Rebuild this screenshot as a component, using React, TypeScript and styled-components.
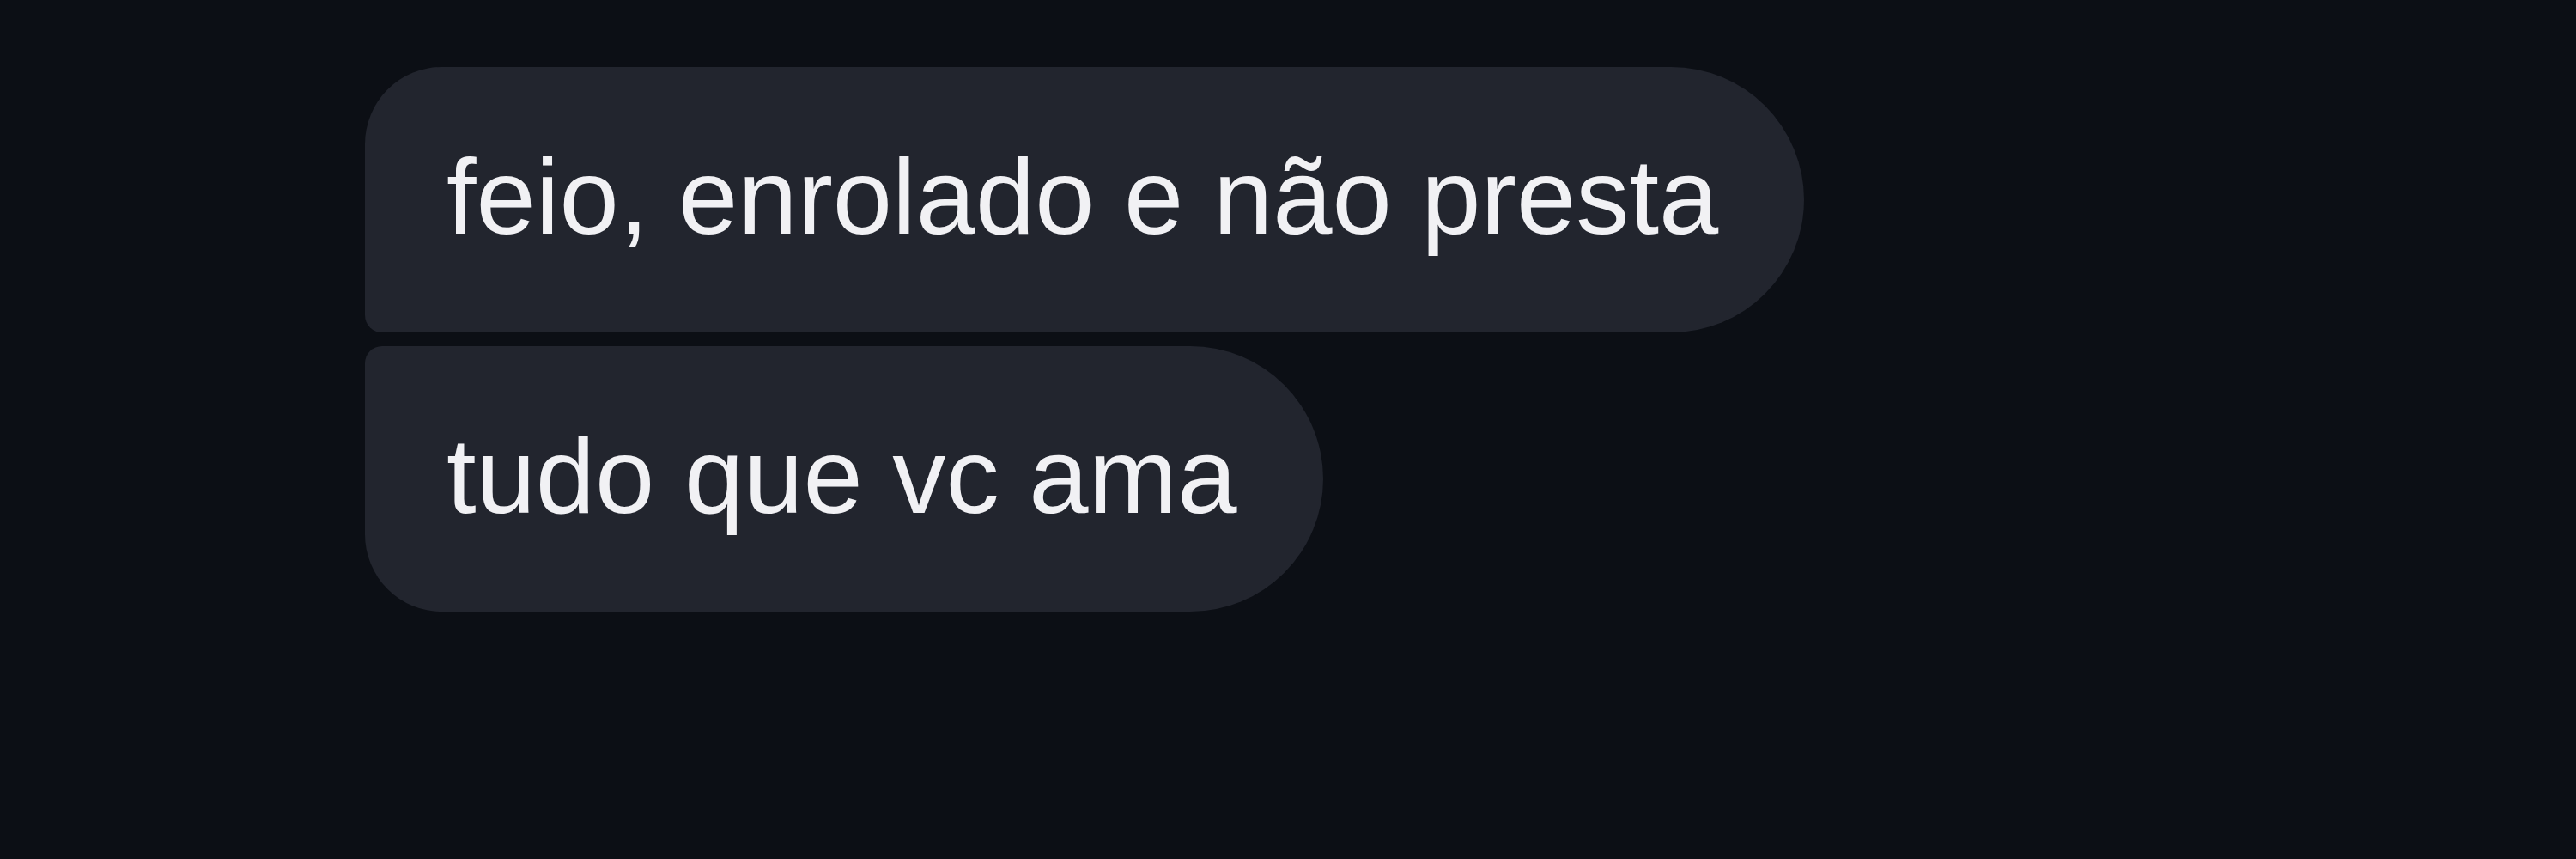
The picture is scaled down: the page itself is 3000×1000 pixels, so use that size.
import React from 'react'
import styled, { createGlobalStyle } from 'styled-components'

const GlobalStyle = createGlobalStyle`
    html, body {
        margin: 0;
        padding: 0;
        background: #0c0f15;
    }
`

const Screen = styled.main`
    width: 3000px;
    height: 1000px;
    background: #0c0f15;
    box-sizing: border-box;
    padding: 78px 0 0 425px;
    display: flex;
    flex-direction: column;
    align-items: flex-start;
    gap: 16px;
`

const Bubble = styled.div<{ $position: 'first' | 'last' }>`
    height: 309px;
    box-sizing: border-box;
    padding: 0 100px 8px 95px;
    display: flex;
    align-items: center;
    background: #22252e;
    color: #f1f1f4;
    font-family: "Liberation Sans", Arial, sans-serif;
    font-size: 124.5px;
    white-space: nowrap;
    border-radius: ${({ $position }) =>
        $position === 'first' ? '90px 155px 155px 20px' : '20px 155px 155px 90px'};
`

const App = () => {
    return (
        <>
            <GlobalStyle />
            <Screen>
                <Bubble $position='first'>feio, enrolado e não presta</Bubble>
                <Bubble $position='last'>tudo que vc ama</Bubble>
            </Screen>
        </>
    )
}

export default App
